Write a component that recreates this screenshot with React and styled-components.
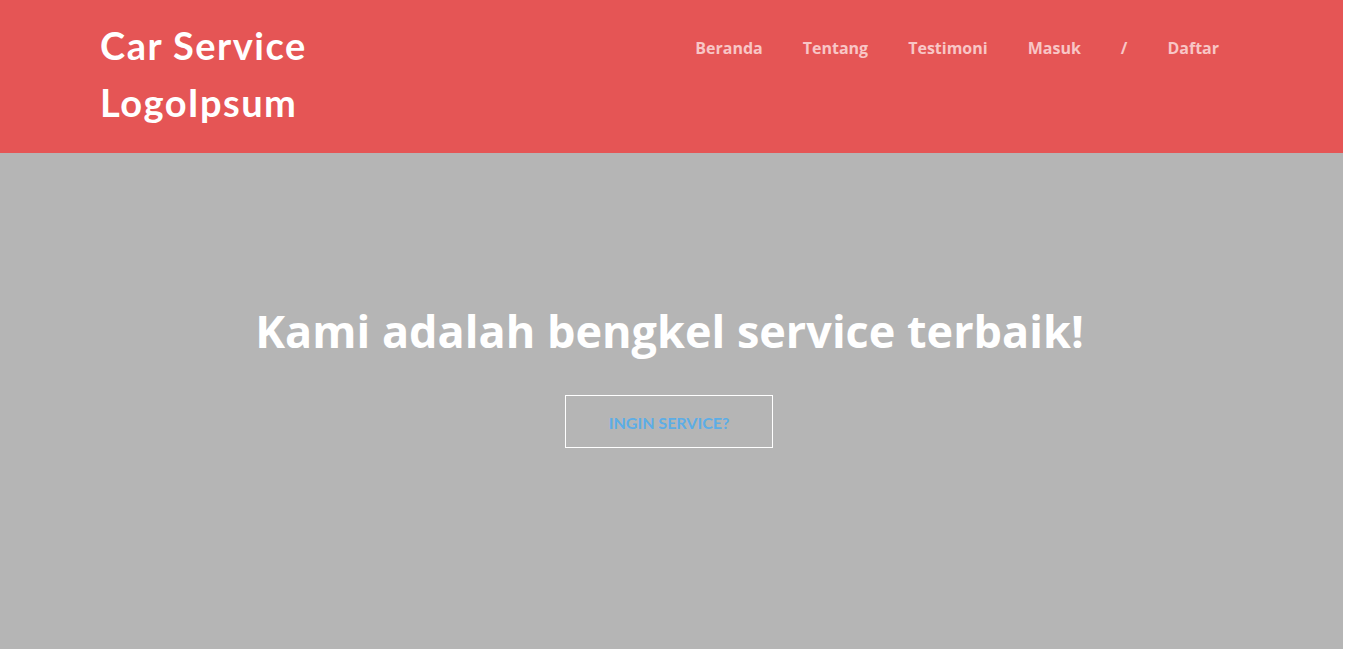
import React from "react";
import styled, { createGlobalStyle } from "styled-components";

const Global = createGlobalStyle`
  html, body { margin: 0; padding: 0; background: #ffffff; }
  #root { margin-right: 2px; }
`;

const Header = styled.header`
  background: #e55555;
  height: 153px;
  box-sizing: border-box;
  padding: 18px 124px 0 100px;
  display: flex;
  justify-content: space-between;
  align-items: flex-start;
`;

const Logo = styled.div`
  font-family: "Lato", "Noto Sans", sans-serif;
  font-weight: 700;
  font-size: 38px;
  line-height: 57px;
  margin-top: -1px;
  color: #ffffff;
  width: 240px;
  letter-spacing: 1.5px;
`;

const Nav = styled.nav`
  display: flex;
  align-items: center;
  height: 60px;
`;

const NavLink = styled.a`
  font-family: "Open Sans", sans-serif;
  font-weight: 700;
  font-size: 16px;
  color: #f8c6c6;
  text-decoration: none;
  padding: 0 20px;
  &:last-child { padding-right: 0; }
`;

const Hero = styled.section`
  background: #b5b5b5;
  height: 496px;
  display: flex;
  flex-direction: column;
  align-items: center;
  padding-top: 146px;
  box-sizing: border-box;
`;

const Title = styled.h1`
  margin: 0 0 0 -4px;
  font-family: "Open Sans", sans-serif;
  font-weight: 700;
  font-size: 45px;
  line-height: 64px;
  color: #ffffff;
`;

const CTA = styled.a`
  margin-top: 32px;
  margin-left: -5px;
  width: 208px;
  height: 53px;
  box-sizing: border-box;
  border: 1px solid #ffffff;
  display: flex;
  align-items: center;
  justify-content: center;
  font-family: "Lato", "Noto Sans", sans-serif;
  font-weight: 700;
  font-size: 16px;
  color: #5cade6;
  text-decoration: none;
  padding-top: 1px;
`;

export default function App() {
  const links = ["Beranda", "Tentang", "Testimoni", "Masuk", "/", "Daftar"];
  return (
    <>
      <Global />
      <Header>
        <Logo>Car Service LogoIpsum</Logo>
        <Nav>
          {links.map((l) => (
            <NavLink key={l} href="#">{l}</NavLink>
          ))}
        </Nav>
      </Header>
      <Hero>
        <Title>Kami adalah bengkel service terbaik!</Title>
        <CTA href="#">INGIN SERVICE?</CTA>
      </Hero>
    </>
  );
}
